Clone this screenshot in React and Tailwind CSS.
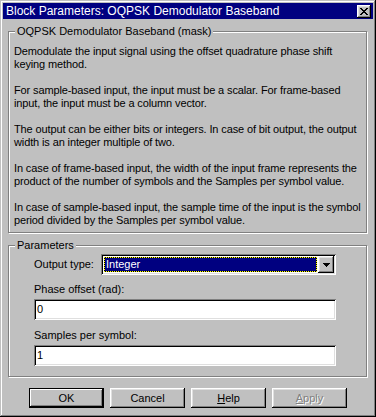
import React from "react";

const font = { fontFamily: '"Liberation Sans", Arial, sans-serif' };

function CloseGlyph() {
  const rows = ["11000011", "01100110", "00111100", "00011000", "00111100", "01100110", "11000011"];
  const rects = [];
  rows.forEach((r, y) =>
    r.split("").forEach((c, x) => {
      if (c === "1") rects.push(<rect key={x + "-" + y} x={x} y={y} width="1" height="1" />);
    })
  );
  return (
    <svg width="8" height="7" viewBox="0 0 8 7" shapeRendering="crispEdges" fill="#000">
      {rects}
    </svg>
  );
}

function DownArrow() {
  return (
    <svg width="7" height="4" viewBox="0 0 7 4" shapeRendering="crispEdges" fill="#000">
      <rect x="0" y="0" width="7" height="1" />
      <rect x="1" y="1" width="5" height="1" />
      <rect x="2" y="2" width="3" height="1" />
      <rect x="3" y="3" width="1" height="1" />
    </svg>
  );
}

const raised =
  "shadow-[inset_-1px_-1px_0_#000,inset_1px_1px_0_#fff,inset_-2px_-2px_0_#808080,inset_2px_2px_0_#dfdfdf]";
const sunken =
  "shadow-[inset_1px_1px_0_#808080,inset_-1px_-1px_0_#fff,inset_2px_2px_0_#000,inset_-2px_-2px_0_#dfdfdf]";
const etched = "border border-[#808080] shadow-[1px_1px_0_#fff,inset_1px_1px_0_#fff]";

function Group({ title, className, children }) {
  return (
    <div className={"relative ml-[5px] w-[359px] " + etched + " " + className}>
      <span className="absolute left-[6px] top-[-7px] bg-[#c0c0c0] px-[2px] text-[11px] leading-[13px] text-black whitespace-nowrap">
        {title}
      </span>
      {children}
    </div>
  );
}

function Button({ children, isDefault, disabled }) {
  return (
    <div
      className={
        "flex h-[20px] w-[75px] items-center justify-center bg-[#c0c0c0] text-[11px] leading-[13px] " +
        (isDefault
          ? "border border-black shadow-[inset_-1px_-1px_0_#000,inset_1px_1px_0_#fff,inset_-2px_-2px_0_#808080]"
          : raised)
      }
    >
      <span
        className={
          disabled ? "text-[#808080] [text-shadow:1px_1px_0_#fff]" : "text-black"
        }
      >
        {children}
      </span>
    </div>
  );
}

export default function App() {
  const lines = [
    "Demodulate the input signal using the offset quadrature phase shift",
    "keying method.",
    "",
    "For sample-based input, the input must be a scalar. For frame-based",
    "input, the input must be a column vector.",
    "",
    "The output can be either bits or integers. In case of bit output, the output",
    "width is an integer multiple of two.",
    "",
    "In case of frame-based input, the width of the input frame represents the",
    "product of the number of symbols and the Samples per symbol value.",
    "",
    "In case of sample-based input, the sample time of the input is the symbol",
    "period divided by the Samples per symbol value.",
  ];
  return (
    <div
      style={font}
      className="relative h-[417px] w-[376px] overflow-hidden bg-[#c0c0c0] p-[3px] text-black shadow-[inset_-1px_-1px_0_#000,inset_1px_1px_0_#c0c0c0,inset_-2px_-2px_0_#808080,inset_2px_2px_0_#fff]"
    >
      {/* Title bar */}
      <div className="flex h-[16px] w-[370px] items-center justify-between bg-[#000080] pl-[3px] pr-[2px]">
        <span className="text-[12px] leading-[16px] text-white whitespace-nowrap">
          Block Parameters: OQPSK Demodulator Baseband
        </span>
        <div className={"flex h-[13px] w-[14px] items-center justify-center bg-[#c0c0c0] " + raised}>
          <CloseGlyph />
        </div>
      </div>

      {/* Description group */}
      <Group title="OQPSK Demodulator Baseband (mask)" className="mt-[12px] h-[202px] pl-[5px] pt-[13px]">
        <div className="text-[11px] leading-[13px] tracking-[-0.12px]">
          {lines.map((l, i) => (
            <div key={i} className="h-[13px] whitespace-nowrap">
              {l}
            </div>
          ))}
        </div>
      </Group>

      {/* Parameters group */}
      <Group title="Parameters" className="mt-[12px] h-[132px] pl-[25px] pt-[8px]">
        <div className="flex items-center">
          <span className="w-[67px] text-[11px] leading-[13px] whitespace-nowrap">Output type:</span>
          <div className={"flex h-[21px] w-[235px] items-stretch bg-white p-[2px] " + sunken}>
            <div className="flex flex-1 p-[1px]">
              <div className="flex flex-1 border border-dotted border-[#ffff00] bg-black">
                <div className="flex flex-1 items-center bg-[#000080] pl-[1px] text-[11px] leading-[13px] text-white">
                  Integer
                </div>
              </div>
            </div>
            <div className={"flex w-[16px] items-center justify-center bg-[#c0c0c0] " + raised}>
              <DownArrow />
            </div>
          </div>
        </div>
        <div className="mt-[8px] text-[11px] leading-[13px]">Phase offset (rad):</div>
        <div className={"mt-[3px] flex h-[21px] w-[302px] items-center bg-white pl-[3px] text-[11px] leading-[13px] " + sunken}>
          0
        </div>
        <div className="mt-[9px] text-[11px] leading-[13px]">Samples per symbol:</div>
        <div className={"mt-[3px] flex h-[21px] w-[302px] items-center bg-white pl-[3px] text-[11px] leading-[13px] " + sunken}>
          1
        </div>
      </Group>

      {/* Buttons */}
      <div className="mt-[11px] flex gap-[6px] pl-[26px]">
        <Button isDefault>OK</Button>
        <Button>Cancel</Button>
        <Button>
          <span className="underline">H</span>elp
        </Button>
        <Button disabled>
          <span className="underline">A</span>pply
        </Button>
      </div>
    </div>
  );
}
